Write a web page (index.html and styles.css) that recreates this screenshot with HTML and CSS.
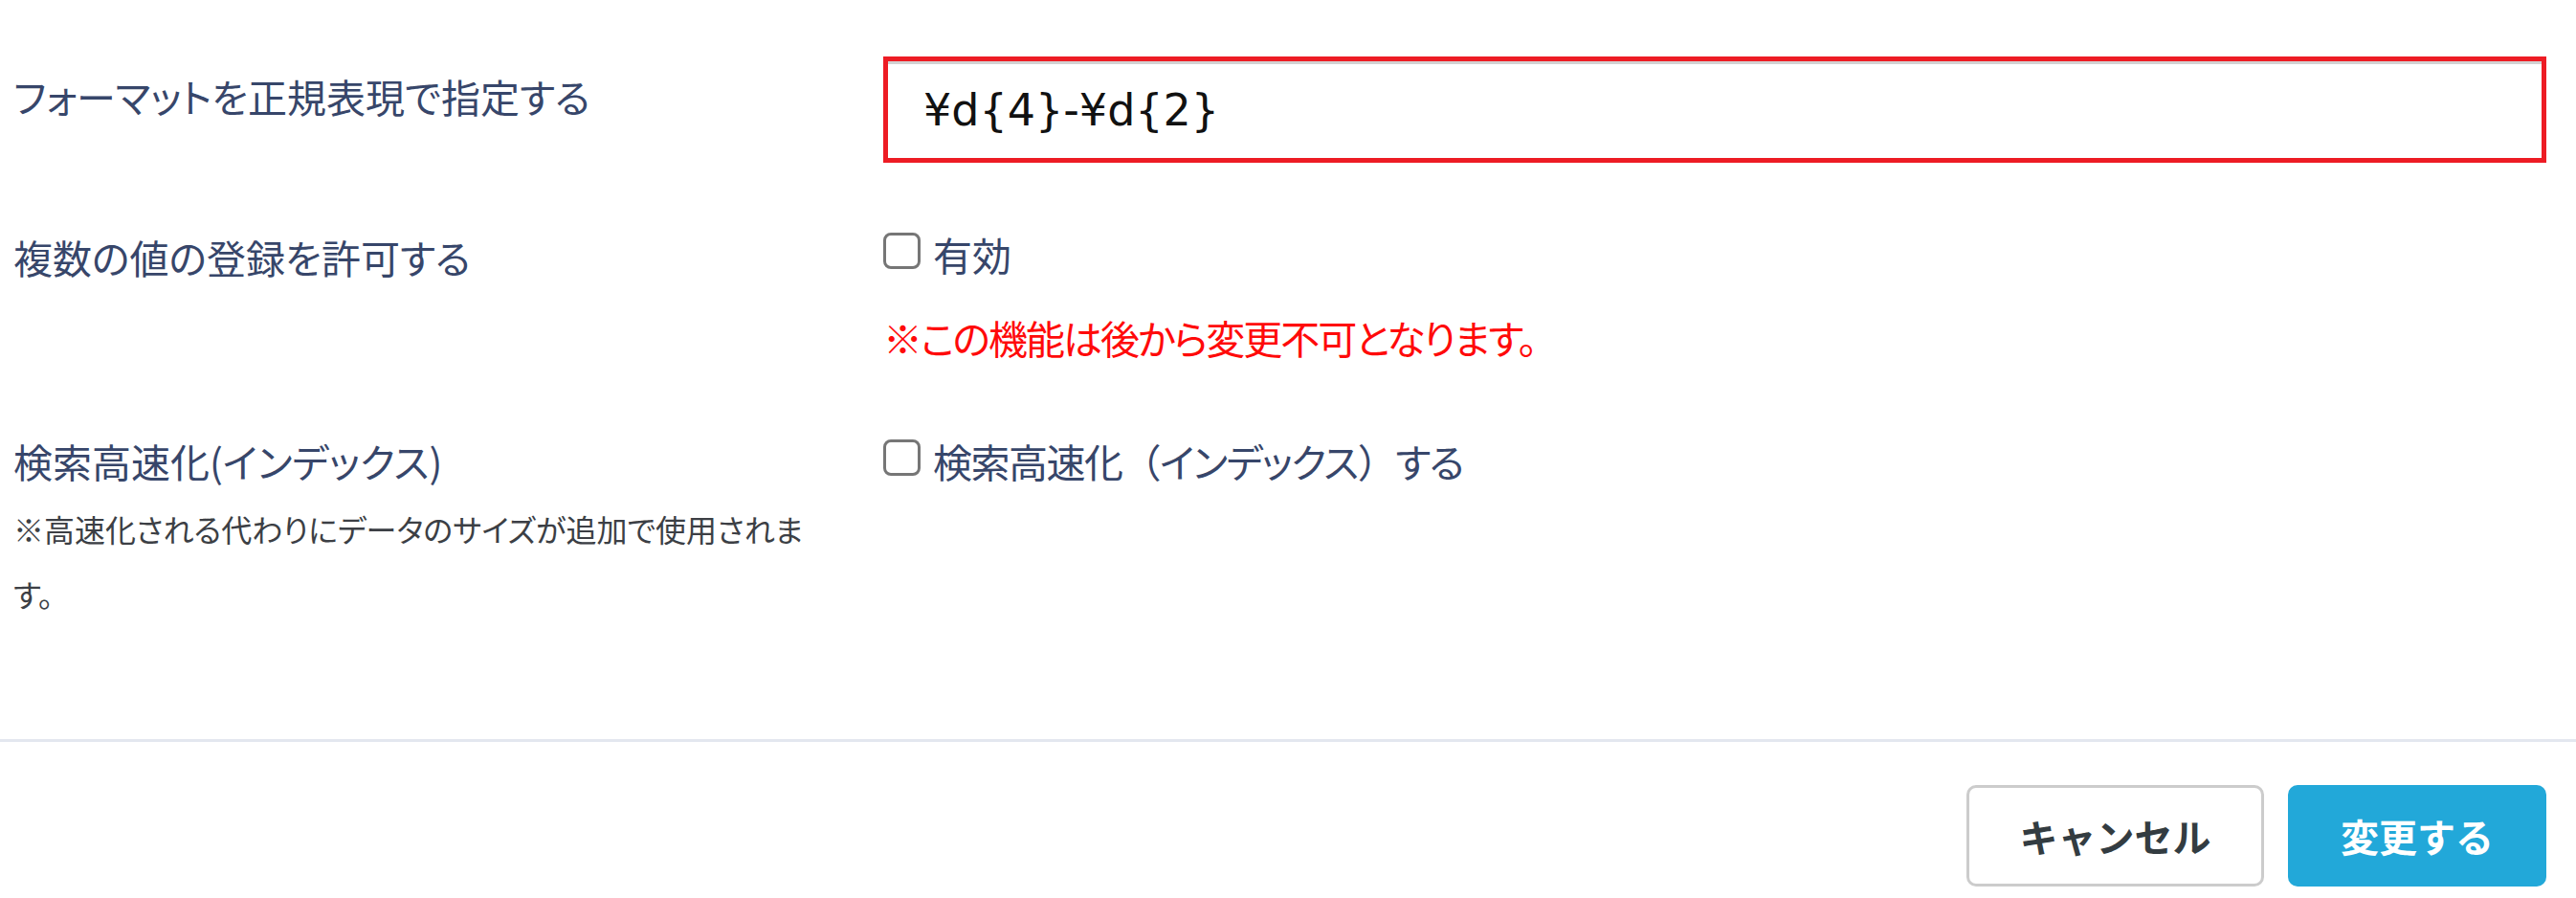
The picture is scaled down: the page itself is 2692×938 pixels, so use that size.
FILE: index.html
```html
<!DOCTYPE html>
<html lang="ja">
<head>
<meta charset="utf-8">
<title>フィールド設定</title>
<link rel="stylesheet" href="styles.css">
</head>
<body>
<div class="form">
  <div class="row row-format">
    <div class="label">フォーマットを正規表現で指定する</div>
    <div class="field">
      <input class="text-input" type="text" value="¥d{4}-¥d{2}">
    </div>
  </div>
  <div class="row row-multi">
    <div class="label">複数の値の登録を許可する</div>
    <div class="field">
      <label class="check"><input class="box" type="checkbox"><span>有効</span></label>
      <p class="warning">※この機能は後から変更不可となります。</p>
    </div>
  </div>
  <div class="row row-index">
    <div class="label">検索高速化(インデックス)
      <p class="note">※高速化される代わりにデータのサイズが追加で使用されます。</p>
    </div>
    <div class="field">
      <label class="check check-tight"><input class="box" type="checkbox"><span>検索高速化<span class="paren">（</span>インデックス<span class="paren">）</span>する</span></label>
    </div>
  </div>
</div>
<div class="footer">
  <button class="btn btn-cancel" type="button">キャンセル</button>
  <button class="btn btn-primary" type="button">変更する</button>
</div>
</body>
</html>
```

FILE: styles.css
```css
* { box-sizing: border-box; }

body {
  margin: 0;
  background: #ffffff;
  font-family: "Noto Sans CJK JP", "Noto Sans", sans-serif;
  color: #37466a;
}

.form {
  padding: 59px 31px 118px 14px;
}

.row {
  display: grid;
  grid-template-columns: 909px 1fr;
}

.row + .row { margin-top: 66px; }
.row-index { margin-top: 71px !important; }

.label {
  font-size: 41px;
  line-height: 58px;
  font-feature-settings: "palt";
  padding-right: 55px;
}

.row-format .label { padding-top: 12px; }
.row-multi .label { padding-top: 3px; }

.note {
  margin: 8px 0 0;
  font-size: 32px;
  line-height: 68px;
  color: #3c3f45;
}

.text-input {
  display: block;
  width: 100%;
  height: 111px;
  border: 5px solid #ed1c24;
  box-shadow: inset 0 3px 0 #d2d2d2;
  padding: 0 0 0 37px;
  margin: 0;
  font-family: "DejaVu Sans", sans-serif;
  font-size: 46px;
  color: #111111;
  outline: none;
  background: #ffffff;
}

.check {
  display: flex;
  align-items: center;
  gap: 13px;
  font-size: 41px;
  line-height: 58px;
  font-feature-settings: "palt";
}

.check-tight span { letter-spacing: -1.5px; }

.paren {
  font-feature-settings: normal;
}

.box {
  appearance: none;
  -webkit-appearance: none;
  width: 39px;
  height: 38px;
  margin: 0 0 6px 0;
  border: 3.5px solid #767676;
  border-radius: 8px;
  background: #ffffff;
  flex: none;
}

.warning {
  margin: 29px 0 0;
  font-size: 41px;
  line-height: 58px;
  letter-spacing: -2px;
  color: #ff0a0a;
  font-feature-settings: "palt";
}

.footer {
  border-top: 3px solid #e3e7ef;
  padding: 45px 31px 12px;
  display: flex;
  justify-content: flex-end;
  gap: 25px;
}

.btn {
  height: 106px;
  font-family: "Noto Sans CJK JP", "Noto Sans", sans-serif;
  font-size: 40px;
  font-weight: 700;
  border-radius: 10px;
  display: flex;
  align-items: center;
  justify-content: center;
}

.btn-cancel {
  width: 311px;
  background: #ffffff;
  border: 3px solid #cccccc;
  color: #333c41;
}

.btn-primary {
  width: 270px;
  background: #22a8d9;
  border: none;
  color: #ffffff;
}
```
